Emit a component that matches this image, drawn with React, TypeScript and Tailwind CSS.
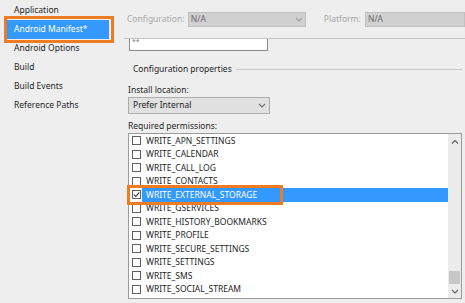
import React from "react";

const perms = [
  "WRITE_APN_SETTINGS",
  "WRITE_CALENDAR",
  "WRITE_CALL_LOG",
  "WRITE_CONTACTS",
  "WRITE_EXTERNAL_STORAGE",
  "WRITE_GSERVICES",
  "WRITE_HISTORY_BOOKMARKS",
  "WRITE_PROFILE",
  "WRITE_SECURE_SETTINGS",
  "WRITE_SETTINGS",
  "WRITE_SMS",
  "WRITE_SOCIAL_STREAM",
];

const side = [
  "Application",
  "Android Manifest*",
  "Android Options",
  "Build",
  "Build Events",
  "Reference Paths",
];

function Chevron({ up = false, color = "#5a5a5a" }: { up?: boolean; color?: string }) {
  return (
    <svg width="8" height="5" viewBox="0 0 8 5">
      <polyline
        points={up ? "1,4.5 4,1.5 7,4.5" : "1,1 4,4 7,1"}
        fill="none"
        stroke={color}
        strokeWidth="1.1"
      />
    </svg>
  );
}

export default function App() {
  return (
    <div className="relative w-[465px] h-[303px] overflow-hidden bg-[#eeeeee] flex text-[#1e1e1e] font-['Noto_Sans',sans-serif] text-[8.5px] leading-none">
      {/* Sidebar */}
      <aside className="w-[122px] shrink-0 pt-[1px]">
        {side.map((s, i) => (
          <div
            key={s}
            className={
              i === 1
                ? "h-[19px] ml-[7px] w-[102px] pl-[7px] flex items-center bg-[#3399ff] text-white"
                : "h-[19px] ml-[7px] w-[102px] pl-[7px] flex items-center"
            }
          >
            {s}
          </div>
        ))}
      </aside>

      {/* Main */}
      <main className="flex-1 flex flex-col min-w-0">
        <div className="h-[38px] shrink-0 flex items-start pt-[12px] pl-[5px] whitespace-nowrap">
          <div className="w-[65px] h-[15px] flex items-center text-[#a8a8a8]">Configuration:</div>
          <div className="w-[118px] h-[15px] shrink-0 bg-[#d0d0d0] border border-[#c0c0c0] flex items-center justify-between pl-[2px] pr-[2px] text-[#6a6a6a]">
            <span>N/A</span>
            <Chevron color="#a0a0a0" />
          </div>
          <div className="w-[44px] ml-[18px] h-[15px] flex items-center text-[#a8a8a8]">Platform:</div>
          <div className="w-[100px] h-[15px] shrink-0 bg-[#d0d0d0] border border-[#c0c0c0] flex items-center pl-[2px] text-[#6a6a6a]">
            N/A
          </div>
        </div>

        <div className="flex-1 border-t border-[#c4c4c4] ml-[2px] flex flex-col">
          <div className="ml-[5px] w-[139px] h-[12px] bg-white border-l border-r border-b border-[#8a8a8a] text-[7px] text-[#888] pl-[2px] leading-[6px]">
            **
          </div>

          <div className="mt-[11px] h-[14px] flex items-center ml-[9px] mr-[3px]">
            <span className="whitespace-nowrap">Configuration properties</span>
            <div className="flex-1 ml-[4px] h-px bg-[#c8c8c8]" />
          </div>

          <div className="mt-[7px] h-[14px] flex items-center ml-[4px]">Install location:</div>

          <div className="ml-[4px] w-[142px] h-[17px] bg-[#e1e1e1] border border-[#adadad] flex items-center justify-between pl-[4px] pr-[3px]">
            <span>Prefer Internal</span>
            <Chevron color="#707070" />
          </div>

          <div className="mt-[6px] h-[13px] flex items-center ml-[4px]">Required permissions:</div>

          <div className="ml-[4px] mr-[3px] h-[166px] bg-white border border-[#9a9a9a] flex">
            <div className="flex-1 flex flex-col">
              {perms.map((p) => {
                const sel = p === "WRITE_EXTERNAL_STORAGE";
                return (
                  <div key={p} className="h-[13.5px] flex items-center">
                    <div className="ml-[3px] w-[9px] h-[9px] shrink-0 border border-[#5f5f5f] bg-white flex items-center justify-center">
                      {sel && (
                        <svg width="7" height="7" viewBox="0 0 7 7">
                          <polyline points="0.8,3.6 2.7,5.5 6.3,1.3" fill="none" stroke="#333" strokeWidth="1.1" />
                        </svg>
                      )}
                    </div>
                    <div
                      className={
                        sel
                          ? "ml-[1px] flex-1 h-full flex items-center pl-[4px] bg-[#3399ff] text-white"
                          : "ml-[1px] flex-1 h-full flex items-center pl-[4px]"
                      }
                    >
                      {p}
                    </div>
                  </div>
                );
              })}
            </div>
            <div className="w-[13px] shrink-0 bg-[#ececec] flex flex-col items-center">
              <div className="h-[14px] flex items-center justify-center">
                <Chevron up color="#606060" />
              </div>
              <div className="flex-1" />
              <div className="w-[11px] h-[13px] bg-[#c8c8c8]" />
              <div className="h-[14px] flex items-center justify-center">
                <Chevron color="#606060" />
              </div>
            </div>
          </div>
        </div>
      </main>

      {/* Annotation overlays */}
      <div className="absolute left-[4px] top-[16px] w-[110px] h-[27px] border-[3px] border-[#ef7b22]" />
      <div className="absolute left-[127px] top-[185px] w-[156px] h-[20px] border-[3px] border-[#ef7b22]" />
    </div>
  );
}
